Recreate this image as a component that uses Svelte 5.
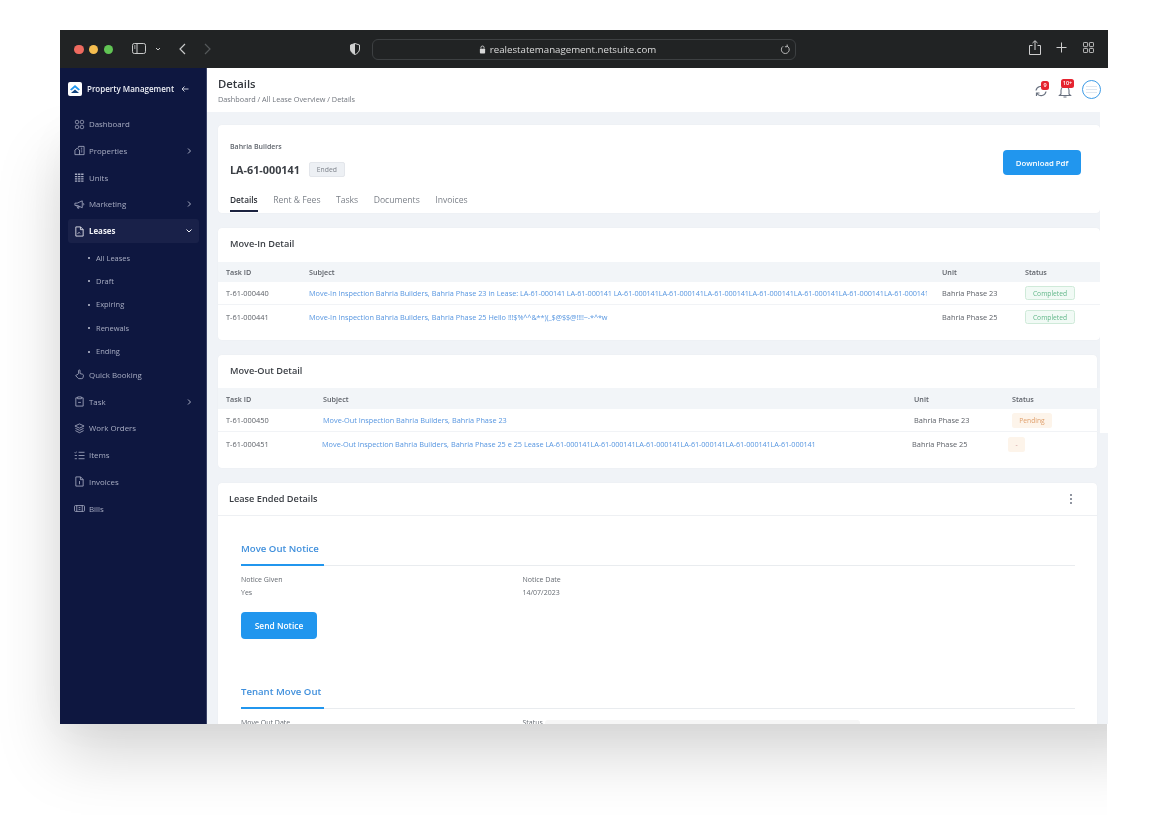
<script>
  const navTop = [
    { label: 'Dashboard', icon: 'dash' },
    { label: 'Properties', icon: 'prop', chev: true },
    { label: 'Units', icon: 'units' },
    { label: 'Marketing', icon: 'mega', chev: true }
  ];
  const subs = ['All Leases', 'Draft', 'Expiring', 'Renewals', 'Ending'];
  const navBottom = [
    { label: 'Quick Booking', icon: 'hand' },
    { label: 'Task', icon: 'task', chev: true },
    { label: 'Work Orders', icon: 'stack' },
    { label: 'Items', icon: 'list' },
    { label: 'Invoices', icon: 'doc' },
    { label: 'Bills', icon: 'bill' }
  ];
  const tabs = ['Details', 'Rent & Fees', 'Tasks', 'Documents', 'Invoices'];
  const code = 'LA-61-000141';
</script>

{#snippet icon(name)}
  <svg class="nav-icon" viewBox="0 0 12 12" fill="none" stroke="currentColor" stroke-width=".9">
    {#if name === 'dash'}
      <rect x="1.5" y="1.5" width="3.6" height="3.6" rx="1.4" /><rect x="6.9" y="1.5" width="3.6" height="3.6" rx="1.4" /><rect x="1.5" y="6.9" width="3.6" height="3.6" rx="1.4" /><rect x="6.9" y="6.9" width="3.6" height="3.6" rx="1.4" />
    {:else if name === 'prop'}
      <path d="M5 3V1.500h6v9H1V5.500L3.500 3.500 6 5.500v5M7.500 3.500h1.500M7.500 5.500h1.500M7.500 7.500h1.500" />
    {:else if name === 'units'}
      <path d="M1 2.500h10M1 5h10M1 7.500h10M1 10h10" stroke-width="1.500" stroke-dasharray="2.600 .8" />
    {:else if name === 'mega'}
      <path d="M1 4.500h2.500L9 2v7.500L3.500 7H1zM3 7l1 3h1.500L5 7.500M10 4.500c1 .5 1 2 0 2.500" />
    {:else if name === 'hand'}
      <path d="M5 5V1.800a.8.8 0 0 1 1.600 0V5l3 .8c.6.200.8.800.7 1.400l-.5 2.300c-.2.700-.7 1-1.300 1H5.500c-.6 0-1-.3-1.400-.8L2 7.500c-.4-.6.400-1.300 1-.9z" />
    {:else if name === 'task'}
      <path d="M4 2H2v9h8V2H8M4 1h4v2H4zM4.500 7h3" />
    {:else if name === 'stack'}
      <path d="M6 1l5 2.300L6 5.600 1 3.300zM1.500 5.800L6 8l4.500-2.200M1.500 8.300L6 10.600l4.500-2.300" />
    {:else if name === 'list'}
      <path d="M5 2.500h6.500M5 6h6.500M5 9.500h6.500M.8 2.500l.8.800L3 2M.8 6h2.400M.8 9.500h2.400" />
    {:else if name === 'doc'}
      <path d="M2 1h5.200L10 3.800V11H2zM7 1v3h3M6 5.500v3.500" />
    {:else if name === 'bill'}
      <rect x=".5" y="2.800" width="11" height="6.400" rx="1.200" /><path d="M3 2.800v6.400M9 2.800v6.400M5 5h2M5 7h2" />
    {/if}
  </svg>
{/snippet}

{#snippet chevron()}
  <svg class="chev" viewBox="0 0 6 8" fill="none" stroke="currentColor" stroke-width="1"><path d="M2 1.500 4.500 4 2 6.500" /></svg>
{/snippet}

<div class="stage">
  <div class="shadow-clip"><div class="shadow"></div></div>

  <div class="window">
    <header class="toolbar">
      <div class="lights"><i class="red"></i><i class="amber"></i><i class="green"></i></div>
      <svg class="tb sidebar-ic" viewBox="0 0 14 11" fill="none" stroke="currentColor"><rect x=".5" y=".5" width="13" height="10" rx="1.800" /><path d="M5 .5v10M2 3h1.500M2 5h1.500" /></svg>
      <svg class="tb small-ch" viewBox="0 0 6 4" fill="none" stroke="currentColor"><path d="M1 1l2 2 2-2" /></svg>
      <svg class="tb back" viewBox="0 0 7 12" fill="none" stroke="currentColor" stroke-width="1.200"><path d="M6 1 1 6l5 5" /></svg>
      <svg class="tb forward" viewBox="0 0 7 12" fill="none" stroke="currentColor" stroke-width="1.200"><path d="m1 1 5 5-5 5" /></svg>
      <svg class="tb shield" viewBox="0 0 10 12"><path d="M5 .5 9.500 2v4c0 3-2.500 4.700-4.500 5.500C3 10.700.5 9 .5 6V2z" fill="none" stroke="#cfd0d0" /><path d="M5 .5 .5 2v4c0 3 2.500 4.700 4.500 5.500z" fill="#cfd0d0" /></svg>
      <div class="url">
        <svg class="lock" viewBox="0 0 8 10"><rect x="1" y="4" width="6" height="5.500" rx="1" fill="#d8d8d8" /><path d="M2.200 4V2.800a1.800 1.800 0 0 1 3.600 0V4" fill="none" stroke="#d8d8d8" /></svg>
        <span>realestatemanagement.netsuite.com</span>
        <svg class="reload" viewBox="0 0 12 12" fill="none" stroke="#c4c4c4"><path d="M7.600 2.200A4.300 4.300 0 1 1 3.400 2.500M7.800.6v2.400H5.400" /></svg>
      </div>
      <div class="tb-right">
        <svg class="tb-share" viewBox="0 0 12 15" fill="none" stroke="#cfcfcf"><path d="M3.500 5.500h-3v9h11v-9h-3M6 10V1M3.500 3 6 .7 8.500 3" /></svg>
        <svg class="tb-plus" viewBox="0 0 11 11" stroke="#cfcfcf"><path d="M5.500.5v10M.5 5.500h10" /></svg>
        <svg class="tb-grid" viewBox="0 0 12 12" fill="none" stroke="#cfcfcf"><rect x=".5" y=".5" width="4.500" height="4.500" rx=".8" /><rect x="7" y=".5" width="4.500" height="4.500" rx=".8" /><rect x=".5" y="7" width="4.500" height="4.500" rx=".8" /><rect x="7" y="7" width="4.500" height="4.500" rx=".8" /></svg>
      </div>
    </header>

    <div class="app">
      <aside class="sidebar">
        <div class="brand">
          <span class="logo"><svg viewBox="0 0 14 14"><path d="M2 7.500 7 3l5 4.500-1.500 1L7 5.500 3.500 8.500z" fill="#2196ee" /><path d="M3 11l4-3.500 4 3.500z" fill="#14457f" /></svg></span>
          <span class="brand-name">Property Management</span>
          <svg class="brand-arrow" viewBox="0 0 8 8" fill="none" stroke="currentColor"><path d="M7.500 4H1M3.500 1.500 1 4l2.500 2.500" /></svg>
        </div>
        <nav class="nav">
          {#each navTop as item}
            <div class="nav-item">
              {@render icon(item.icon)}<span>{item.label}</span>
              {#if item.chev}{@render chevron()}{/if}
            </div>
          {/each}
          <div class="nav-item active">
            <svg class="nav-icon" viewBox="0 0 12 12" fill="none" stroke="currentColor" stroke-width=".9"><path d="M2 1h5.200L10 3.800V11H2zM7 1v3h3M4 8.500l1.500-1.500 1 1" /></svg>
            <span>Leases</span>
            <svg class="chev down" viewBox="0 0 8 6" fill="none" stroke="currentColor"><path d="M1.500 1.500 4 4l2.500-2.500" /></svg>
          </div>
          <ul class="subs">
            {#each subs as s}<li>{s}</li>{/each}
          </ul>
          {#each navBottom as item}
            <div class="nav-item">
              {@render icon(item.icon)}<span>{item.label}</span>
              {#if item.chev}{@render chevron()}{/if}
            </div>
          {/each}
        </nav>
      </aside>

      <main class="main">
        <div class="pagehead">
          <div>
            <h1>Details</h1>
            <p class="crumbs">Dashboard / All Lease Overview / Details</p>
          </div>
          <div class="head-icons">
            <span class="hi sync">
              <svg viewBox="0 0 14 14" fill="none" stroke="#6a7280" stroke-width="1.200"><path d="M2 6.500A5 5 0 0 1 11 4.500M12 7.500A5 5 0 0 1 3 9.500M11.500 2v3h-3M2.500 12V9h3" /></svg>
              <b class="badge">9</b>
            </span>
            <span class="hi bell">
              <svg viewBox="0 0 14 14" fill="none" stroke="#6a7280" stroke-width="1.100"><path d="M3 10V6.500a4 4 0 0 1 8 0V10l1.500 1.500h-11zM5.500 13h3" /></svg>
              <b class="badge wide">10+</b>
            </span>
            <span class="avatar"><i></i><i></i><i></i></span>
          </div>
        </div>

        <div class="content">
          <section class="card top">
            <div class="top-row">
              <div>
                <p class="owner">Bahria Builders</p>
                <div class="lease-line"><h2>{code}</h2><span class="ended">Ended</span></div>
              </div>
              <button class="btn dl">Download Pdf</button>
            </div>
            <div class="tabs">
              {#each tabs as t, i}<span class:on={i === 0}>{t}</span>{/each}
            </div>
          </section>

          <section class="card">
            <h3 class="card-title">Move-In Detail</h3>
            <div class="row head in"><span>Task ID</span><span>Subject</span><span>Unit</span><span>Status</span></div>
            <div class="row in line"><span>T-61-000440</span><a href="#a">Move-In Inspection Bahria Builders, Bahria Phase 23 in Lease: <span class="code">{code} {code} {code}{code}{code}{code}{code}{code}{code}L</span></a><span>Bahria Phase 23</span><span><em class="st ok">Completed</em></span></div>
            <div class="row in second"><span>T-61-000441</span><a href="#a">Move-In Inspection Bahria Builders, Bahria Phase 25 Hello <span class="code">!!!$%^^&amp;**)(_$@$$@!!!!~-*^*w</span></a><span>Bahria Phase 25</span><span><em class="st ok">Completed</em></span></div>
          </section>

          <section class="card narrow">
            <h3 class="card-title out-title">Move-Out Detail</h3>
            <div class="row head out wide-row"><span>Task ID</span><span>Subject</span><span>Unit</span><span>Status</span></div>
            <div class="row out line wide-row"><span>T-61-000450</span><a href="#a">Move-Out Inspection Bahria Builders, Bahria Phase 23</a><span>Bahria Phase 23</span><span><em class="st pend">Pending</em></span></div>
            <div class="row out2 last"><span>T-61-000451</span><a href="#a">Move-Out Inspection Bahria Builders, Bahria Phase 25 e 25 Lease <span class="code">{code}{code}{code}{code}{code}{code}</span></a><span>Bahria Phase 25</span><span><em class="st dash">-</em></span></div>
          </section>

          <section class="card narrow lease">
            <div class="lease-head">
              <h3>Lease Ended Details</h3>
              <svg class="dots" viewBox="0 0 4 12" fill="#6b7280"><circle cx="2" cy="2" r="1" /><circle cx="2" cy="6" r="1" /><circle cx="2" cy="10" r="1" /></svg>
            </div>
            <div class="lease-body">
              <h4 class="sec"><span>Move Out Notice</span></h4>
              <div class="fields">
                <div><p>Notice Given</p><p>Yes</p></div>
                <div><p>Notice Date</p><p>14/07/2023</p></div>
              </div>
              <button class="btn send">Send Notice</button>
              <h4 class="sec second-sec"><span>Tenant Move Out</span></h4>
              <div class="fields clipped">
                <div><p>Move Out Date</p></div>
                <div><p>Status</p></div>
              </div>
            </div>
          </section>
        </div>
        <div class="edge"></div>
        <div class="toast-edge"></div>
      </main>
    </div>
  </div>
</div>

<style>
  :global(body) { margin: 0; background: #fff; }
  .stage {
    position: relative; width: 1170px; height: 815px; overflow: hidden; background: #fff;
    padding: 30px 0 0 60px; box-sizing: border-box;
    font-family: "Open Sans", "Liberation Sans", sans-serif; color: #4a4f57;
  }
  .shadow-clip { position: absolute; left: 0; top: 0; width: 1107px; height: 815px; overflow: hidden; }
  .shadow { position: absolute; left: 60px; top: 130px; width: 1100px; height: 594px; box-shadow: 0 30px 60px rgba(0,0,0,.17), 0 0 40px rgba(0,0,0,.03); }
  .window { position: relative; width: 1048px; height: 694px; overflow: hidden; display: flex; flex-direction: column; filter: blur(.45px); background: #fff; }

  .toolbar { position: relative; flex: 0 0 38px; background: #212324; color: #c9caca; }
  .toolbar > * { position: absolute; }
  .lights { left: 14px; top: 14.500px; display: flex; gap: 5.300px; }
  .lights i { width: 9.500px; height: 9.500px; border-radius: 50%; }
  .red { background: #ee6a5f; } .amber { background: #f5bd4f; } .green { background: #61c454; }
  .sidebar-ic { left: 72px; top: 13px; width: 14px; height: 11px; }
  .small-ch { left: 95px; top: 17px; width: 6px; height: 4px; }
  .back { left: 119px; top: 13px; width: 7px; height: 12px; }
  .forward { left: 144px; top: 13px; width: 7px; height: 12px; color: #55585a; }
  .shield { left: 290px; top: 13px; width: 10px; height: 12px; }
  .url { left: 312px; top: 9px; width: 424px; height: 21px; box-sizing: border-box; border: 1px solid #3d4042; border-radius: 6px; display: flex; align-items: center; justify-content: center; gap: 4px; color: #dcdcdc; font-size: 9.700px; padding: 0 33px 1px 0; }
  .lock { width: 7px; height: 9px; }
  .reload { position: absolute; right: 4px; top: 4px; width: 11px; height: 11px; }
  .tb-right { right: 14px; top: 10px; display: flex; align-items: center; gap: 15px; }
  .tb-share { width: 12px; height: 15px; }
  .tb-plus { width: 11px; height: 11px; }
  .tb-grid { width: 11px; height: 11px; margin-left: 1px; }

  .app { flex: 1; display: flex; min-height: 0; }
  .sidebar { flex: 0 0 147px; background: #0e1740; color: #a8adc2; border-right: 1px solid #3b4468; box-sizing: border-box; }
  .brand { height: 42px; display: flex; align-items: center; padding: 0 0 1px 8px; box-sizing: border-box; color: #fff; }
  .logo { width: 14px; height: 14px; background: #fff; border-radius: 2px; display: block; margin-right: 5px; }
  .logo svg { display: block; width: 14px; height: 14px; }
  .brand-name { font-size: 8px; font-weight: 600; white-space: nowrap; color: #eef0f6; }
  .brand-arrow { width: 8px; height: 8px; margin-left: 7px; color: #c8cbd8; }
  .nav { display: flex; flex-direction: column; gap: 2.750px; padding: 2.200px 7px 0 8px; }
  .nav-item { height: 24px; display: flex; align-items: center; font-size: 7.900px; padding: 0 7px 0 6px; border-radius: 3px; position: relative; }
  .nav-item span { margin-left: 4px; }
  .nav-icon { width: 11px; height: 11px; flex: none; }
  .chev { width: 6px; height: 8px; margin-left: auto; }
  .chev.down { width: 8px; height: 6px; margin-right: -1px; }
  .active { background: #192149; color: #f0f1f6; font-weight: 700; }
  .subs { list-style: none; margin: 0 0 -2.750px; padding: 0; font-size: 7.500px; }
  .subs li { height: 23.400px; display: flex; align-items: center; padding-left: 28px; position: relative; }
  .subs li::before { content: ""; position: absolute; left: 20px; top: 11px; width: 2px; height: 2px; border-radius: 50%; background: #c3c7d6; }

  .main { position: relative; flex: 1; min-width: 0; background: #f0f3f7; overflow: hidden; }
  .pagehead { height: 44px; background: #fff; display: flex; justify-content: space-between; padding-left: 11px; box-sizing: border-box; }
  h1 { margin: 9px 0 0; font-size: 11.300px; line-height: 13px; font-weight: 600; color: #33373d; }
  .crumbs { margin: 4px 0 0; font-size: 7.300px; line-height: 10px; color: #70757d; }
  .head-icons { display: flex; align-items: flex-start; padding: 12px 7px 0 0; }
  .hi { position: relative; width: 14px; height: 14px; margin-top: 4px; }
  .hi svg { display: block; width: 14px; height: 14px; }
  .bell { margin-left: 10px; }
  .badge { position: absolute; left: 7px; top: -3px; min-width: 7px; height: 9px; padding: 0 .5px; border-radius: 2.500px; background: #e5232f; color: #fff; font-size: 5.500px; line-height: 9px; text-align: center; font-weight: 600; }
  .badge.wide { left: 3px; top: -5px; min-width: 12px; }
  .avatar { width: 19px; height: 19px; border: 1px solid #3d9be6; border-radius: 50%; margin-left: 10px; box-sizing: border-box; display: flex; flex-direction: column; align-items: center; justify-content: center; gap: 2px; }
  .avatar i { display: block; width: 11px; height: 1px; background: #dfe7f0; }

  .content { padding: 13px 8px 0 11px; display: flex; flex-direction: column; gap: 15px; }
  .card { background: #fff; border-radius: 4px; box-shadow: 0 0 1px rgba(60,70,90,.08); }
  .narrow { margin-right: 3px; }
  .top { height: 88px; padding: 0 19px 0 12px; box-sizing: border-box; display: flex; flex-direction: column; }
  .top-row { display: flex; justify-content: space-between; height: 62px; }
  .owner { margin: 17px 0 0; font-size: 7px; line-height: 10px; color: #5f646c; font-weight: 600; }
  .lease-line { display: flex; align-items: center; margin-top: 10px; }
  h2 { margin: 0; font-size: 10.800px; line-height: 15px; font-weight: 700; color: #3a3e44; }
  .ended { margin-left: 9px; width: 36px; height: 15px; background: #edf0f4; border: 1px solid #e3e6eb; box-sizing: border-box; border-radius: 2px; font-size: 6.800px; line-height: 13px; text-align: center; color: #7f848c; }
  .btn { border: 0; border-radius: 4px; background: #2196ee; color: #fff; font-family: inherit; font-weight: 600; padding: 0; }
  .dl { width: 78px; height: 25px; margin-top: 25px; font-size: 7.800px; }
  .tabs { display: flex; gap: 15.500px; font-size: 8.600px; color: #7d828a; height: 26px; }
  .tabs span { height: 25px; line-height: 26px; box-sizing: border-box; }
  .tabs .on { color: #2d3138; font-weight: 600; font-size: 8.300px; border-bottom: 2px solid #1b2340; }

  .card-title { margin: 0; height: 34px; padding-left: 12px; font-size: 9.200px; line-height: 31px; font-weight: 600; color: #3a3e44; box-sizing: border-box; }
  .out-title { height: 33px; line-height: 31px; }
  .row { display: grid; align-items: center; padding-left: 8px; font-size: 7.400px; color: #5d6168; height: 23px; }
  .row > * { min-width: 0; white-space: nowrap; overflow: hidden; }
  .row a { color: #5796e0; text-decoration: none; font-size: 7.320px; }
  .code { letter-spacing: -.13px; }
  .row.head { height: 20px; background: #f2f5f8; font-weight: 600; color: #5d6168; font-size: 7.200px; }
  .in { grid-template-columns: 83px 618px 15px 83px 1fr; }
  .in > :nth-child(3) { grid-column: 4; }
  .in > :nth-child(4) { grid-column: 5; }
  .out { grid-template-columns: 97px 591px 98px 1fr; }
  .row.head.out { height: 21px; }
  .out2 { grid-template-columns: 96px 590px 96px 1fr; }
  .line { border-bottom: 1px solid #f1f3f6; box-sizing: border-box; }
  .second { margin-bottom: 12px; }
  .wide-row { margin-right: -3px; }
  .last { height: 24px; margin-bottom: 12px; }
  .st { display: inline-block; font-style: normal; height: 14px; line-height: 13px; box-sizing: border-box; text-align: center; font-size: 6.700px; border-radius: 2.500px; vertical-align: middle; }
  .ok { width: 50px; background: #f1faf5; border: 1px solid #cfead9; color: #63b88a; }
  .pend { width: 40px; height: 15px; line-height: 15px; background: #fdf4ea; color: #e0a06d; }
  .dash { width: 17px; height: 15px; line-height: 15px; background: #fdf4ea; color: #c99; }

  .lease-head { height: 33px; border-bottom: 1px solid #eef0f3; display: flex; align-items: center; justify-content: space-between; padding: 0 24px 1px 11px; box-sizing: border-box; }
  .lease-head h3 { margin: 0; font-size: 9.200px; font-weight: 600; color: #3a3e44; }
  .dots { width: 4px; height: 12px; }
  .lease-body { padding: 0 22px 0 23px; }
  .sec { margin: 0; height: 50px; box-sizing: border-box; border-bottom: 1px solid #e9ecef; display: flex; align-items: flex-end; font-size: 9.600px; font-weight: 600; color: #3f8fdc; }
  .sec span { display: block; width: 83px; height: 26px; line-height: 18px; border-bottom: 2px solid #2196ee; margin-bottom: -1px; white-space: nowrap; box-sizing: border-box; }
  .second-sec { margin-top: 28px; height: 42px; }
  .fields { display: grid; grid-template-columns: 281.500px 1fr; padding-top: 7px; font-size: 7px; line-height: 13px; color: #666b72; }
  .fields p { margin: 0; }
  .send { display: block; width: 76px; height: 27px; margin-top: 13px; font-size: 8.400px; }

  .edge { position: absolute; right: 0; top: 44px; width: 8px; height: 321px; background: #fff; }
  .toast-edge { position: absolute; left: 338px; width: 315px; bottom: 0; height: 4px; background: #f6f6f6; border-radius: 3px 3px 0 0; }
</style>
